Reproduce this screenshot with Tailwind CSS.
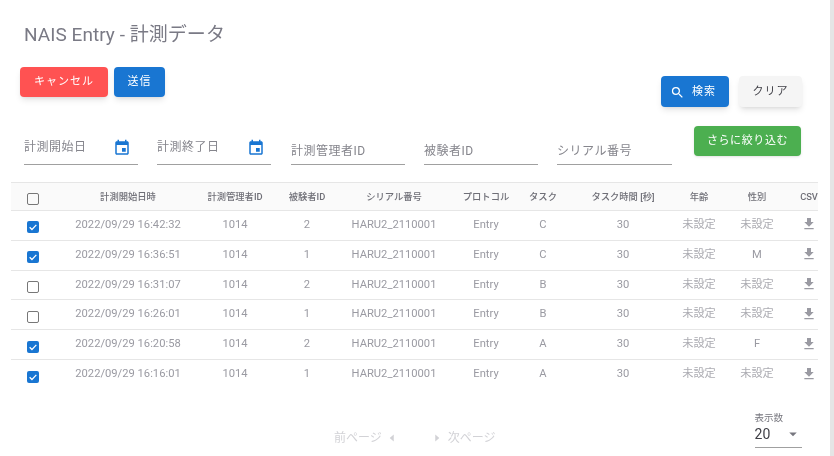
<!DOCTYPE html>
<html lang="ja">
<head>
    <meta charset="UTF-8">
    <title>NAIS Entry - 計測データ</title>
    <script src="https://cdn.jsdelivr.net/npm/@tailwindcss/browser@4"></script>
</head>
<body class="bg-white overflow-hidden font-['Roboto','Noto_Sans_CJK_JP',sans-serif]">
<div class="flex h-[456px] w-[834px] will-change-transform">
    <div class="w-[830px] shrink-0 flex flex-col">
        <h1 class="pl-6 pt-[21px] h-[67px] text-[19px] leading-[27px] text-[#7a7a85] tracking-[0.05px]">NAIS Entry - 計測データ</h1>
        <div class="flex justify-between items-start pl-5 pr-[28px] h-[54px]">
            <div class="flex gap-[6px]">
                <button class="w-[88px] h-[30px] pt-[1px] rounded bg-[#ff5252] text-white text-[11px] tracking-[1px] shadow-md">キャンセル</button>
                <button class="w-[51px] h-[30px] pt-[1px] rounded bg-[#1976d2] text-white text-[11px] tracking-[1px] shadow-md">送信</button>
            </div>
            <div class="flex gap-[10px] mt-[9px]">
                <button class="w-[68px] h-[31px] pl-[9px] pt-[1px] rounded bg-[#1976d2] text-white text-[11px] tracking-[1px] shadow-md flex items-center gap-[7px]">
                    <svg class="w-[15px] h-[15px]" viewBox="0 0 24 24" fill="currentColor"><path d="M15.5 14h-.79l-.28-.27A6.47 6.47 0 0 0 16 9.5 6.5 6.5 0 1 0 9.5 16c1.61 0 3.09-.59 4.23-1.57l.27.28v.79l5 4.99L20.49 19l-4.99-5zm-6 0C7.01 14 5 11.99 5 9.5S7.01 5 9.5 5 14 7.01 14 9.5 11.99 14 9.5 14z"/></svg>
                    検索
                </button>
                <button class="w-[63px] h-[31px] pt-[1px] rounded bg-[#f5f5f5] text-[#3f3f46] text-[11px] tracking-[1px] shadow-md">クリア</button>
            </div>
        </div>
        <div class="flex items-start pl-6 h-[61px]">
            <div class="w-[114px] h-[40px] mt-[4px] border-b border-[#a0a0a0] flex justify-between items-start pt-[13px] pr-[7px] text-[12px] text-[#85858c] tracking-[0.5px]"><span>計測開始日</span><svg class="w-[18px] h-[18px] mt-[1px]" viewBox="0 0 24 24" fill="#1976d2"><path d="M19 3h-1V1h-2v2H8V1H6v2H5c-1.1 0-2 .9-2 2v14c0 1.1.9 2 2 2h14c1.1 0 2-.9 2-2V5c0-1.1-.9-2-2-2zm0 16H5V8h14v11zM12 12h5v5h-5z"/></svg></div>
            <div class="w-[114px] h-[40px] mt-[4px] ml-[19px] border-b border-[#a0a0a0] flex justify-between items-start pt-[13px] pr-[6px] text-[12px] text-[#85858c] tracking-[0.5px]"><span>計測終了日</span><svg class="w-[18px] h-[18px] mt-[1px]" viewBox="0 0 24 24" fill="#1976d2"><path d="M19 3h-1V1h-2v2H8V1H6v2H5c-1.1 0-2 .9-2 2v14c0 1.1.9 2 2 2h14c1.1 0 2-.9 2-2V5c0-1.1-.9-2-2-2zm0 16H5V8h14v11zM12 12h5v5h-5z"/></svg></div>
            <div class="w-[114px] h-[40px] mt-[4px] ml-[20px] border-b border-[#a0a0a0] pt-[17px] text-[12px] text-[#85858c] tracking-[0.5px]">計測管理者ID</div>
            <div class="w-[114px] h-[40px] mt-[4px] ml-[19px] border-b border-[#a0a0a0] pt-[17px] text-[12px] text-[#85858c] tracking-[0.5px]">被験者ID</div>
            <div class="w-[115px] h-[40px] mt-[4px] ml-[19px] border-b border-[#a0a0a0] pt-[17px] text-[12px] text-[#85858c] tracking-[0.5px]">シリアル番号</div>
            <button class="ml-[22px] mt-[5px] w-[107px] h-[30px] pt-[1px] rounded bg-[#4caf50] text-white text-[11px] tracking-[0.6px] shadow-sm">さらに絞り込む</button>
        </div>
        <div class="ml-[11px] w-[807px] overflow-hidden">
            <table class="w-[817px] table-fixed border-collapse text-[11.2px] text-[#9a9aa2]">
                <colgroup>
                    <col class="w-[59px]"><col class="w-[116px]"><col class="w-[98px]"><col class="w-[46px]"><col class="w-[128px]"><col class="w-[56px]"><col class="w-[58px]"><col class="w-[102px]"><col class="w-[50px]"><col class="w-[66px]"><col class="w-[38px]">
                </colgroup>
                <thead>
                    <tr class="h-[28px] bg-[#fafafa] border-y border-[#e6e6e6] text-[9.3px] text-[#6f6f77]">
                        <th class="p-0"><span class="block ml-[16px] translate-y-[2px] w-[12px] h-[12px] rounded-[2px] border-[1.5px] border-[#777]"></span></th>
                        <th class="p-0 font-medium">計測開始日時</th><th class="p-0 font-medium">計測管理者ID</th><th class="p-0 font-medium">被験者ID</th><th class="p-0 font-medium">シリアル番号</th><th class="p-0 font-medium">プロトコル</th><th class="p-0 font-medium">タスク</th><th class="p-0 font-medium">タスク時間 [秒]</th><th class="p-0 font-medium">年齢</th><th class="p-0 font-medium">性別</th><th class="p-0 font-medium">CSV</th>
                    </tr>
                </thead>
                <tbody id="rows" class="text-center"></tbody>
            </table>
        </div>
        <div class="flex items-start mt-[20px]">
            <div class="flex items-center ml-[334px] mt-[20px] text-[12px] text-[#d2d2d6]">
                <span>前ページ</span>
                <svg class="w-[14px] h-[14px] ml-[3px]" viewBox="0 0 24 24" fill="#d2d2d6"><path d="M15 6l-7 6 7 6z"/></svg>
                <svg class="w-[14px] h-[14px] ml-[31px]" viewBox="0 0 24 24" fill="#d2d2d6"><path d="M9 6l7 6-7 6z"/></svg>
                <span class="ml-[4px]">次ページ</span>
            </div>
            <div class="ml-[259px] w-[47px] h-[37px] border-b border-[#a0a0a0] mt-[2px]">
                <div class="text-[9.5px] leading-[12px] text-[#77777f] pt-[1px]">表示数</div>
                <div class="flex justify-between items-center text-[14px] leading-[20px] text-[#3f3f46]"><span>20</span><svg class="w-[18px] h-[18px]" viewBox="0 0 24 24" fill="#77777f"><path d="M7 10l5 5 5-5z"/></svg></div>
            </div>
        </div>
    </div>
    <div class="w-[4px] bg-[#e5e5e5]"></div>
</div>
<script>
    const data = [
        [true, '16:42:32', 2, 'C', '未設定'],
        [true, '16:36:51', 1, 'C', 'M'],
        [false, '16:31:07', 2, 'B', '未設定'],
        [false, '16:26:01', 1, 'B', '未設定'],
        [true, '16:20:58', 2, 'A', 'F'],
        [true, '16:16:01', 1, 'A', '未設定'],
    ];
    const checked = '<span class="ml-[16px] translate-y-[2px] w-[12px] h-[12px] rounded-[2px] bg-[#1976d2] flex items-center justify-center"><svg class="w-[10px] h-[10px]" viewBox="0 0 24 24" fill="none" stroke="white" stroke-width="3"><path d="M4 12.5l5.5 5.5L20 7"/></svg></span>';
    const unchecked = '<span class="block ml-[16px] translate-y-[2px] w-[12px] h-[12px] rounded-[2px] border-[1.5px] border-[#777]"></span>';
    const download = '<svg class="w-[16px] h-[16px] ml-[11px] -translate-y-px" viewBox="0 0 24 24" fill="#9a9aa2"><path d="M19 9h-4V3H9v6H5l7 7 7-7zM5 18v2h14v-2H5z"/></svg>';
    const unset = '<span class="text-[#acacb2]">未設定</span>';
    document.getElementById('rows').innerHTML = data.map((r, i) => {
        const line = i < data.length - 1 ? 'border-b border-[#e6e6e6]' : '';
        const cells = ['2022/09/29 ' + r[1], '1014', r[2], 'HARU2_2110001', 'Entry', r[3], '30', unset, r[4] === '未設定' ? unset : r[4]];
        return '<tr class="h-[29.8px] ' + line + '"><td class="p-0">' + (r[0] ? checked : unchecked) + '</td>'
            + cells.map(c => '<td class="p-0">' + c + '</td>').join('')
            + '<td class="p-0">' + download + '</td></tr>';
    }).join('');
</script>
</body>
</html>
